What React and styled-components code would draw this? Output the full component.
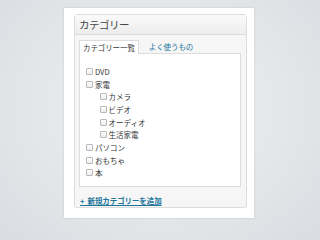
import React from "react";
import styled, { createGlobalStyle } from "styled-components";

const GlobalStyle = createGlobalStyle`
  html, body {
    margin: 0;
    padding: 0;
  }
  body {
    width: 320px;
    height: 240px;
    overflow: hidden;
    background: radial-gradient(ellipse at 50% 45%, #eef0f2 0%, #e3e6e9 60%, #d9dce0 100%);
    font-family: "Noto Sans CJK JP", "Noto Sans", sans-serif;
  }
`;

const Stage = styled.div`
  display: flex;
  padding: 8px 0 0 64px;
`;

const Card = styled.div`
  width: 190px;
  height: 210px;
  box-sizing: border-box;
  background: #fff;
  padding: 6px 7px 10px 10px;
  box-shadow: 0 0 2px rgba(0, 0, 0, 0.14);
  display: flex;
`;

const Box = styled.div`
  flex: 1;
  display: flex;
  flex-direction: column;
  border: 1px solid #dcdcdc;
  border-radius: 3px;
  background: #f6f6f6;
`;

const BoxHeader = styled.div`
  height: 19px;
  display: flex;
  align-items: center;
  padding-left: 4px;
  border-bottom: 1px solid #dcdcdc;
  background: linear-gradient(#fafafa, #ededed);
  font-size: 10.5px;
  color: #464646;
  letter-spacing: -0.5px;
`;

const BoxBody = styled.div`
  flex: 1;
  display: flex;
  flex-direction: column;
  padding: 4px 5px 0 4px;
`;

const Tabs = styled.div`
  display: flex;
  align-items: flex-end;
  height: 14px;
`;

const Tab = styled.div`
  height: 14px;
  box-sizing: border-box;
  display: flex;
  align-items: center;
  padding: ${p => (p.$active ? "0 3px" : "0 9px")};
  font-size: 7.5px;
  letter-spacing: -0.1px;
  color: ${p => (p.$active ? "#333" : "#21759b")};
  background: ${p => (p.$active ? "#fff" : "transparent")};
  border: 1px solid ${p => (p.$active ? "#dcdcdc" : "transparent")};
  border-bottom: none;
  margin-bottom: ${p => (p.$active ? "-1px" : "0")};
  position: relative;
  z-index: 1;
`;

const Panel = styled.div`
  height: 134px;
  box-sizing: border-box;
  background: #fff;
  border: 1px solid #dcdcdc;
  padding: 11px 0 0 6px;
`;

const Row = styled.label`
  display: flex;
  align-items: center;
  height: 12.7px;
  padding-left: ${p => (p.$child ? "13.5px" : "0")};
  font-size: 7.5px;
  color: #333;
`;

const Check = styled.span`
  width: 5px;
  height: 5px;
  border: 1px solid #b9b9b9;
  border-radius: 1px;
  background: linear-gradient(#fff, #ececec);
  margin-right: 2px;
  flex-shrink: 0;
`;

const AddLink = styled.a`
  margin-top: 8px;
  padding-left: 1px;
  font-size: 7.5px;
  font-weight: bold;
  color: #21759b;
  text-decoration: underline;
  letter-spacing: -0.1px;
  white-space: pre;
`;

const items = [
  { label: "DVD" },
  { label: "家電" },
  { label: "カメラ", child: true },
  { label: "ビデオ", child: true },
  { label: "オーディオ", child: true },
  { label: "生活家電", child: true },
  { label: "パソコン" },
  { label: "おもちゃ" },
  { label: "本" },
];

export default function App() {
  return (
    <>
      <GlobalStyle />
      <Stage>
        <Card>
          <Box>
            <BoxHeader>カテゴリー</BoxHeader>
            <BoxBody>
              <Tabs>
                <Tab $active>カテゴリー一覧</Tab>
                <Tab>よく使うもの</Tab>
              </Tabs>
              <Panel>
                {items.map((it, i) => (
                  <Row key={i} $child={it.child}>
                    <Check />
                    {it.label}
                  </Row>
                ))}
              </Panel>
              <AddLink>{"+  新規カテゴリーを追加"}</AddLink>
            </BoxBody>
          </Box>
        </Card>
      </Stage>
    </>
  );
}
